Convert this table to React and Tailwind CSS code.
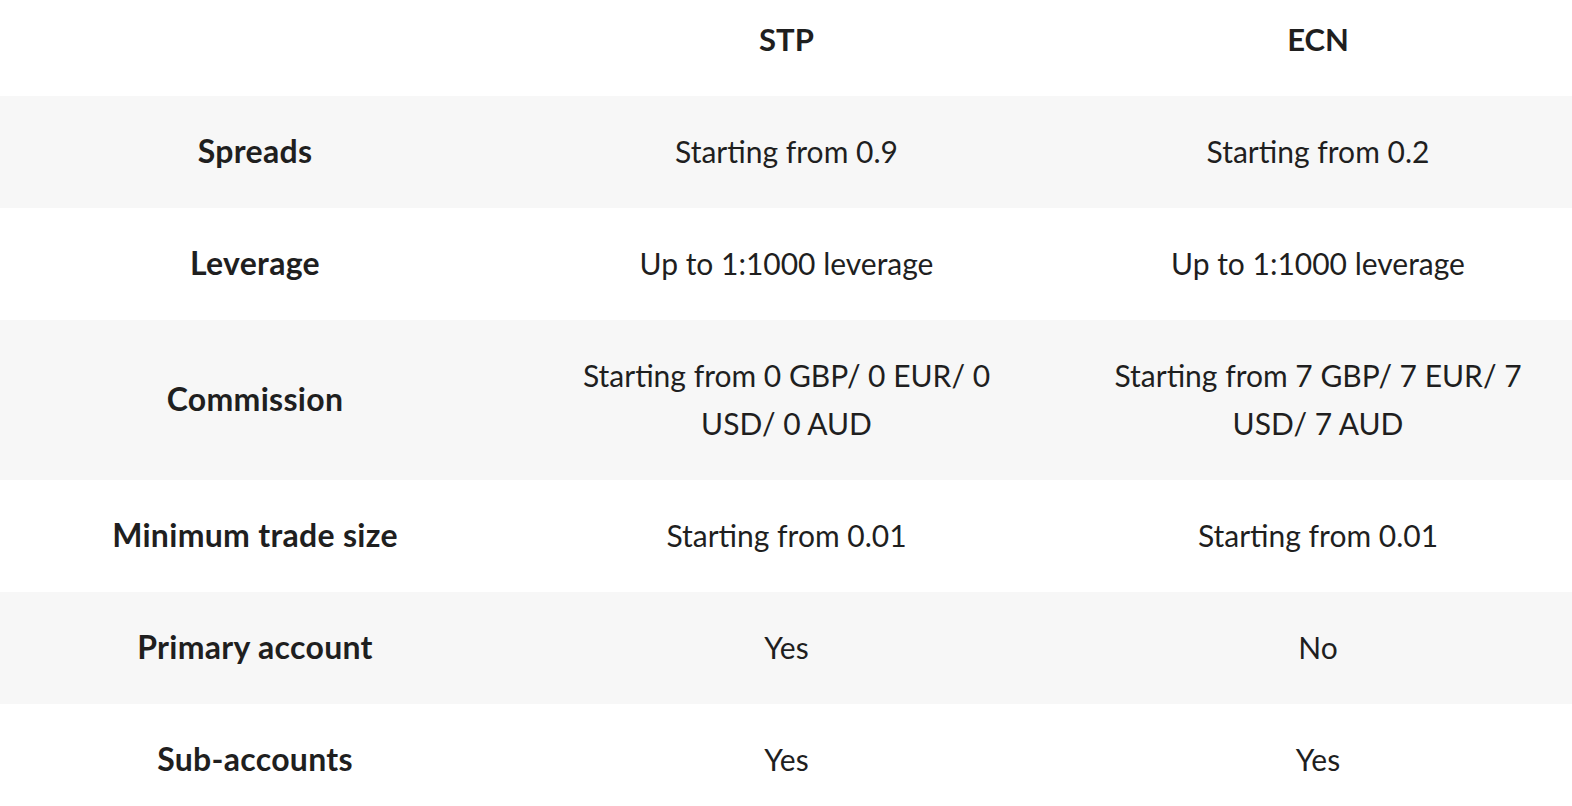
import React from 'react'

const rows = [
    { label: 'Spreads', stp: 'Starting from 0.9', ecn: 'Starting from 0.2' },
    { label: 'Leverage', stp: 'Up to 1:1000 leverage', ecn: 'Up to 1:1000 leverage' },
    {
        label: 'Commission',
        stp: ['Starting from 0 GBP/ 0 EUR/ 0', 'USD/ 0 AUD'],
        ecn: ['Starting from 7 GBP/ 7 EUR/ 7', 'USD/ 7 AUD'],
        tall: true,
    },
    { label: 'Minimum trade size', stp: 'Starting from 0.01', ecn: 'Starting from 0.01' },
    { label: 'Primary account', stp: 'Yes', ecn: 'No' },
    { label: 'Sub-accounts', stp: 'Yes', ecn: 'Yes' },
]

const Cell = ({ value }) => {
    if (Array.isArray(value)) {
        return (
            <span>
                {value[0]}
                <br />
                {value[1]}
            </span>
        )
    }
    return <span>{value}</span>
}

const App = () => {
    return (
        <div
            className="w-full bg-white text-[#1f1f1f] text-[30px] leading-[48px]"
            style={{ fontFamily: 'Lato, "Liberation Sans", sans-serif' }}
        >
            <div className="grid grid-cols-[510px_550px_1fr] h-[96px] pt-[15px] text-center font-bold text-[31px]">
                <div></div>
                <div className="pl-[3px]">STP</div>
                <div className="pl-[4px]">ECN</div>
            </div>
            {rows.map((row, i) => (
                <div
                    key={row.label}
                    className={`grid grid-cols-[510px_550px_1fr] items-center text-center pb-[3px] ${row.tall ? 'h-[160px]' : 'h-[112px]'} ${i % 2 === 0 ? 'bg-[#f7f7f7]' : 'bg-white'}`}
                >
                    <div className="font-bold text-[32px] tracking-[0.3px]">{row.label}</div>
                    <div className="pl-[3px]">
                        <Cell value={row.stp} />
                    </div>
                    <div className="pl-[4px]">
                        <Cell value={row.ecn} />
                    </div>
                </div>
            ))}
        </div>
    )
}

export default App
